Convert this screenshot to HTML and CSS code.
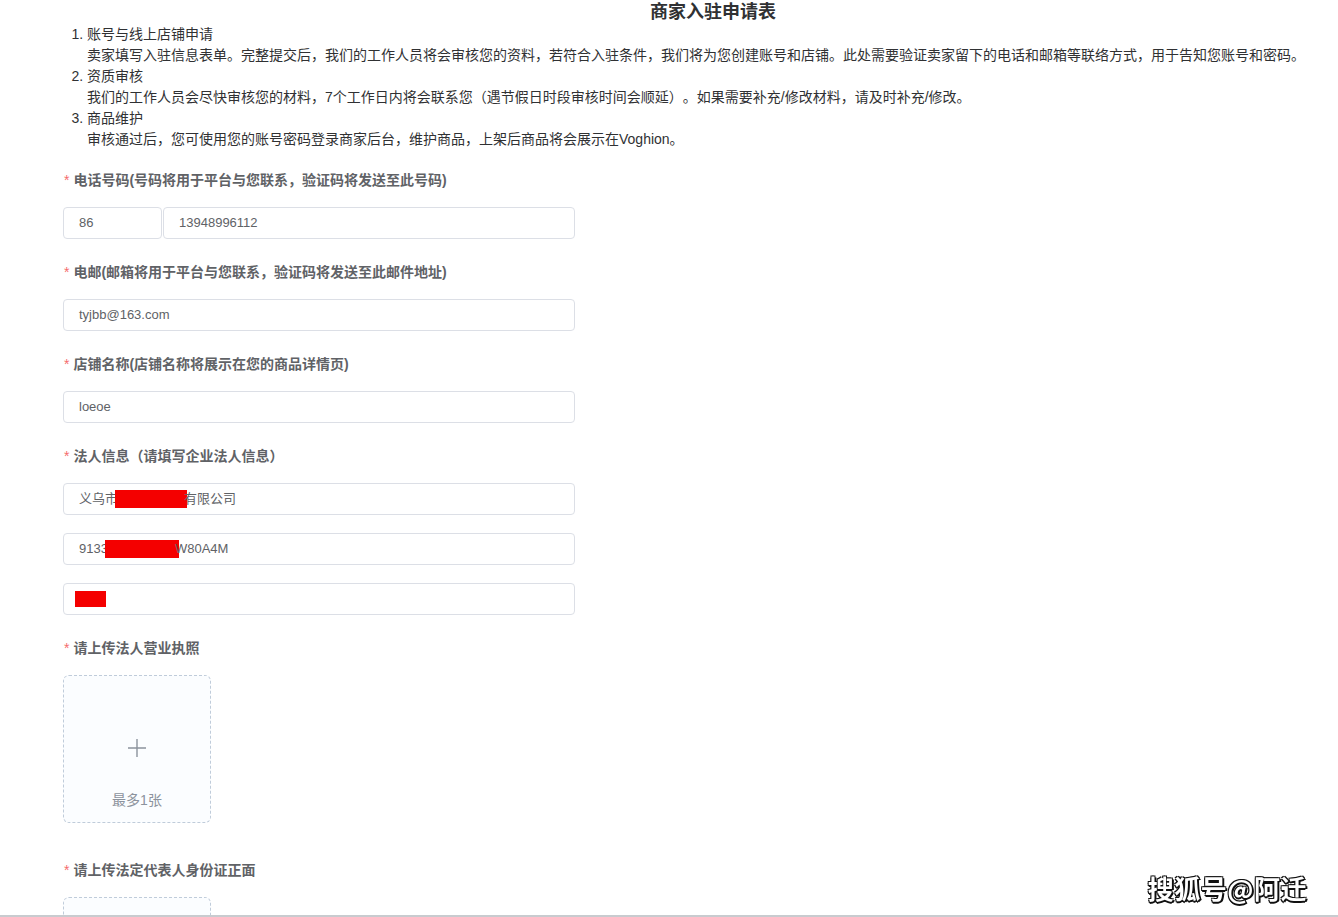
FILE: index.html
```html
<!DOCTYPE html>
<html lang="zh-CN">
<head>
<meta charset="utf-8">
<title>商家入驻申请表</title>
<link rel="stylesheet" href="styles.css">
</head>
<body>
<div class="page">
  <h1 class="title">商家入驻申请表</h1>
  <ol class="steps">
    <li>
      <div class="step-name">账号与线上店铺申请</div>
      <div class="step-desc">卖家填写入驻信息表单。完整提交后，我们的工作人员将会审核您的资料，若符合入驻条件，我们将为您创建账号和店铺。此处需要验证卖家留下的电话和邮箱等联络方式，用于告知您账号和密码。</div>
    </li>
    <li>
      <div class="step-name">资质审核</div>
      <div class="step-desc">我们的工作人员会尽快审核您的材料，7个工作日内将会联系您（遇节假日时段审核时间会顺延）。如果需要补充/修改材料，请及时补充/修改。</div>
    </li>
    <li>
      <div class="step-name">商品维护</div>
      <div class="step-desc">审核通过后，您可使用您的账号密码登录商家后台，维护商品，上架后商品将会展示在Voghion。</div>
    </li>
  </ol>

  <div class="form">
    <div class="form-item">
      <div class="label">电话号码(号码将用于平台与您联系，验证码将发送至此号码)</div>
      <div class="phone-row">
        <div class="input input-code">86</div>
        <div class="input input-grow">13948996112</div>
      </div>
    </div>

    <div class="form-item">
      <div class="label">电邮(邮箱将用于平台与您联系，验证码将发送至此邮件地址)</div>
      <div class="input">tyjbb@163.com</div>
    </div>

    <div class="form-item">
      <div class="label">店铺名称(店铺名称将展示在您的商品详情页)</div>
      <div class="input">loeoe</div>
    </div>

    <div class="form-item">
      <div class="label">法人信息（请填写企业法人信息）</div>
      <div class="input-stack">
        <div class="input">义乌市<span class="redact redact-company"></span>有限公司</div>
        <div class="input">9133<span class="redact redact-code"></span>W80A4M</div>
        <div class="input input-redact-only"><span class="redact redact-name"></span></div>
      </div>
    </div>

    <div class="form-item form-item-upload">
      <div class="label">请上传法人营业执照</div>
      <div class="upload">
        <svg class="upload-plus" width="20" height="20" viewBox="0 0 20 20"><path d="M10 1V19M1 10H19" stroke="#8c939d" stroke-width="1.4" fill="none"/></svg>
        <div class="upload-tip">最多1张</div>
      </div>
    </div>

    <div class="form-item form-item-upload">
      <div class="label">请上传法定代表人身份证正面</div>
      <div class="upload">
        <svg class="upload-plus" width="20" height="20" viewBox="0 0 20 20"><path d="M10 1V19M1 10H19" stroke="#8c939d" stroke-width="1.4" fill="none"/></svg>
        <div class="upload-tip">最多1张</div>
      </div>
    </div>
  </div>
</div>

<div class="watermark">搜狐号@阿迁</div>
<div class="bottom-line"></div>
</body>
</html>
```

FILE: styles.css
```css
html, body {
  margin: 0;
  padding: 0;
  background: #ffffff;
}

body {
  font-family: "Liberation Sans", "Noto Sans CJK SC", sans-serif;
  color: #333333;
  overflow: hidden;
  text-spacing-trim: space-all;
}

.page {
  width: 1338px;
  height: 917px;
  overflow: hidden;
}

.title {
  margin: 0;
  padding-left: 88px;
  text-align: center;
  font-size: 18px;
  line-height: 24px;
  font-weight: bold;
  color: #303133;
}

.steps {
  margin: 0;
  padding: 0 0 0 87px;
  font-size: 14px;
  line-height: 21px;
  color: #303133;
}

.step-name,
.step-desc {
  white-space: nowrap;
}

.form {
  margin-top: 20px;
  padding-left: 63px;
  width: 512px;
}

.form-item {
  margin-bottom: 23px;
}

.form-item-upload {
  margin-bottom: 37px;
}

.label {
  padding-left: 1px;
  margin-bottom: 17px;
  font-size: 14px;
  line-height: 20px;
  font-weight: bold;
  color: #606266;
  white-space: nowrap;
}

.label::before {
  content: "*";
  color: #f56c6c;
  font-weight: normal;
  margin-right: 4px;
}

.input {
  box-sizing: border-box;
  height: 32px;
  padding: 0 15px;
  border: 1px solid #dcdfe6;
  border-radius: 4px;
  background: #ffffff;
  font-size: 13px;
  line-height: 30px;
  color: #606266;
  white-space: nowrap;
  display: flex;
  align-items: center;
}

.phone-row {
  display: flex;
  gap: 1px;
}

.input-code {
  width: 99px;
  flex: none;
}

.input-grow {
  flex: 1;
}

.input-stack {
  display: flex;
  flex-direction: column;
  gap: 18px;
}

.redact {
  display: inline-block;
  background: #f40000;
  height: 18px;
}

.redact-company {
  width: 72px;
  margin-left: -3px;
  margin-right: -3px;
}

.redact-code {
  width: 74px;
  margin-left: -3px;
  margin-right: -4px;
}

.input-redact-only {
  padding-left: 11px;
}

.redact-name {
  width: 31px;
  height: 16px;
}

.upload {
  box-sizing: border-box;
  width: 148px;
  height: 148px;
  border: 1px dashed #c0ccda;
  border-radius: 6px;
  background: #fbfdff;
  display: flex;
  flex-direction: column;
  align-items: center;
  padding-top: 62px;
}

.upload-plus {
  display: block;
}

.upload-tip {
  margin-top: 32px;
  font-size: 14px;
  line-height: 20px;
  color: #8c939d;
}

.watermark {
  position: fixed;
  right: 31px;
  top: 871px;
  font-family: "Noto Sans CJK SC", sans-serif;
  font-size: 26px;
  line-height: 34px;
  font-weight: bold;
  color: #ffffff;
  letter-spacing: 0.5px;
  text-shadow:
    1px 1px 0 #111, -1px -1px 0 #111, 1px -1px 0 #111, -1px 1px 0 #111,
    2px 1px 0 #111, 0 2px 0 #111;
}

.bottom-line {
  position: fixed;
  left: 0;
  right: 0;
  bottom: 0;
  height: 2px;
  background: #c8cbcf;
}
```
